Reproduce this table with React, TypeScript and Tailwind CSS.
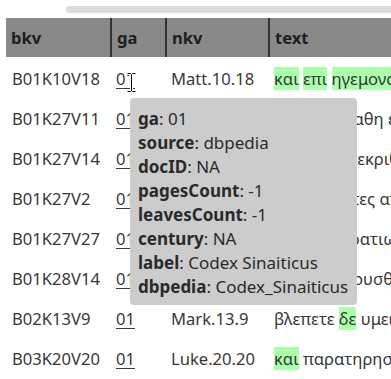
import React from "react";

type Row = {
  bkv: string;
  nkv: string;
  words: { w: string; hl?: boolean }[];
};

const t = (s: string, hl: number[] = []) =>
  s.split(" ").map((w, i) => ({ w, hl: hl.includes(i) }));

const rows: Row[] = [
  { bkv: "B01K10V18", nkv: "Matt.10.18", words: t("και επι ηγεμονας δε και βασιλεις", [0, 1, 2]) },
  { bkv: "B01K27V11", nkv: "Matt.27.11", words: t("ο δε ις εσταθη εμπροσθεν του ηγεμονος") },
  { bkv: "B01K27V14", nkv: "Matt.27.14", words: t("και ουκ απεκριθη αυτω προς ουδε εν ρημα") },
  { bkv: "B01K27V2", nkv: "Matt.27.2", words: t("και δησαντες απηγαγον αυτον") },
  { bkv: "B01K27V27", nkv: "Matt.27.27", words: t("τοτε οι στρατιωται του ηγεμονος") },
  { bkv: "B01K28V14", nkv: "Matt.28.14", words: t("και εαν ακουσθη τουτο επι του ηγεμονος") },
  { bkv: "B02K13V9", nkv: "Mark.13.9", words: t("βλεπετε δε υμεις εαυτους", [1]) },
  { bkv: "B03K20V20", nkv: "Luke.20.20", words: t("και παρατηρησαντες απεστειλαν", [0]) },
];

const info: [string, string][] = [
  ["ga", "01"],
  ["source", "dbpedia"],
  ["docID", "NA"],
  ["pagesCount", "-1"],
  ["leavesCount", "-1"],
  ["century", "NA"],
  ["label", "Codex Sinaiticus"],
  ["dbpedia", "Codex_Sinaiticus"],
];

export default function App() {
  return (
    <div className="relative w-[391px] h-[379px] overflow-hidden bg-white font-['Noto_Sans',sans-serif] text-[16.6px] leading-[24px] text-[#383838]">
      {/* scrollbar */}
      <div className="pt-[6px] pl-[66px]">
        <div className="h-[7px] rounded-l-full bg-[#dcdcdc]" />
      </div>

      <div className="pl-[6px] pt-[5px]">
        <table className="w-max border-collapse whitespace-nowrap">
          <thead>
            <tr className="bg-[#898989] text-[#1e1e1e] font-bold text-left">
              <th className="w-[105px] h-[39px] px-[5px] pt-[1px] border-r-2 border-[#333]">bkv</th>
              <th className="w-[55px] px-[5px] pt-[1px] border-r-2 border-[#333]">ga</th>
              <th className="w-[103px] px-[5px] pt-[1px] border-r-2 border-[#333]">nkv</th>
              <th className="w-[160px] px-[5px] pt-[1px]">text</th>
            </tr>
          </thead>
          <tbody>
            {rows.map((r) => (
              <tr key={r.bkv} className="h-[40px]">
                <td className="px-[6px] pt-[10px] pb-[6px]">{r.bkv}</td>
                <td className="px-[5px] pt-[10px] pb-[6px]">
                  <span className="underline underline-offset-[3px]">01</span>
                </td>
                <td className="px-[5px] pt-[10px] pb-[6px]">{r.nkv}</td>
                <td className="px-[5px] pt-[10px] pb-[6px]">
                  {r.words.map((w, i) => (
                    <React.Fragment key={i}>
                      {i > 0 && " "}
                      <span className={w.hl ? "bg-[#aaffaa]" : ""}>{w.w}</span>
                    </React.Fragment>
                  ))}
                </td>
              </tr>
            ))}
          </tbody>
        </table>
      </div>

      {/* tooltip */}
      <div className="absolute left-[130px] top-[98px] w-[227px] rounded-[4px] bg-[#cccccc] px-[8px] pt-[9px] pb-[6px] text-[#2a2a2a] text-[17px]">
        {info.map(([k, v]) => (
          <div key={k}>
            <span className="font-bold">{k}</span>: {v}
          </div>
        ))}
      </div>

      {/* I-beam cursor */}
      <svg className="absolute left-[126px] top-[72px]" width="11" height="21" viewBox="0 0 11 21">
        <path
          d="M1.5 1.5h3l1 1 1-1h3M5.5 2.5v16M1.5 19.5h3l1-1 1 1h3"
          fill="none"
          stroke="#fff"
          strokeWidth="3"
        />
        <path
          d="M1.5 1.5h3l1 1 1-1h3M5.5 2.5v16M1.5 19.5h3l1-1 1 1h3"
          fill="none"
          stroke="#000"
          strokeWidth="1"
        />
      </svg>
    </div>
  );
}
